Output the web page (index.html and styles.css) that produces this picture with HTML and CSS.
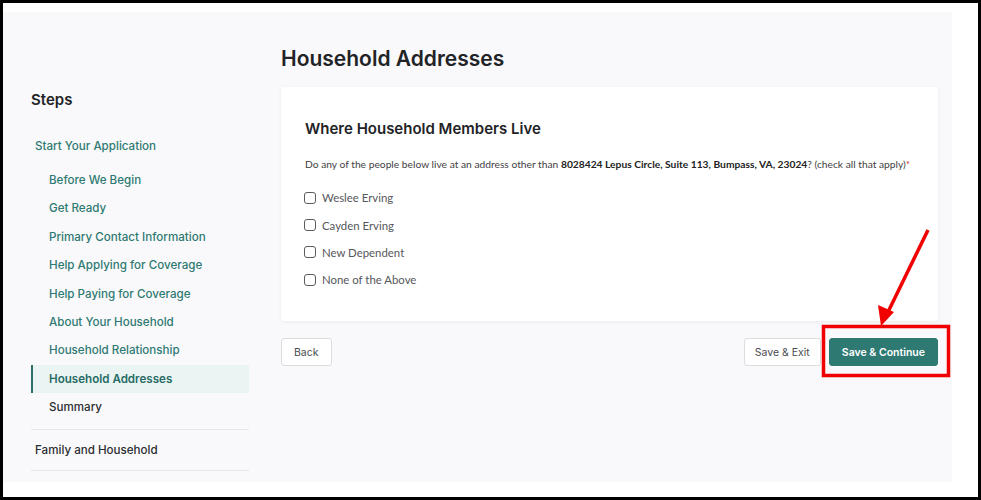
FILE: index.html
```html
<!DOCTYPE html>
<html lang="en">
<head>
<meta charset="utf-8">
<title>Household Addresses</title>
<link rel="stylesheet" href="styles.css">
</head>
<body>
<div class="frame">
  <div class="page">
    <aside class="sidebar">
      <h2 class="steps-title">Steps</h2>
      <div class="group">
        <div class="group-title">Start Your Application</div>
        <ul class="step-list">
          <li>Before We Begin</li>
          <li>Get Ready</li>
          <li>Primary Contact Information</li>
          <li>Help Applying for Coverage</li>
          <li>Help Paying for Coverage</li>
          <li>About Your Household</li>
          <li>Household Relationship</li>
          <li class="active">Household Addresses</li>
          <li class="pending">Summary</li>
        </ul>
      </div>
      <div class="group group-plain">
        <div class="group-title dark">Family and Household</div>
      </div>
    </aside>
    <main class="content">
      <h1 class="page-title">Household Addresses</h1>
      <section class="card">
        <h3 class="card-title">Where Household Members Live</h3>
        <p class="question">Do any of the people below live at an address other than <b>8028424 Lepus Circle, Suite 113, Bumpass, VA, 23024</b>? (check all that apply)<span class="req">*</span></p>
        <ul class="options">
          <li><span class="box"></span>Weslee Erving</li>
          <li><span class="box"></span>Cayden Erving</li>
          <li><span class="box"></span>New Dependent</li>
          <li><span class="box"></span>None of the Above</li>
        </ul>
      </section>
      <div class="actions">
        <button class="btn back">Back</button>
        <div class="right-actions">
          <button class="btn exit">Save &amp; Exit</button>
          <button class="btn primary">Save &amp; Continue</button>
        </div>
      </div>
    </main>
    <svg class="annotation" width="981" height="500" viewBox="0 0 981 500">
      <line x1="928" y1="230" x2="888" y2="312" stroke="#f00000" stroke-width="3.5"/>
      <polygon points="881,326 878,305 894,312" fill="#f00000"/>
      <rect x="823.5" y="326.5" width="125" height="49" fill="none" stroke="#f00000" stroke-width="3.5"/>
    </svg>
  </div>
</div>
</body>
</html>
```
FILE: styles.css
```css
* { box-sizing: border-box; }
html, body { margin: 0; padding: 0; }
body { background: #ffffff; font-family: "Inter", "Liberation Sans", sans-serif; }

.frame {
  width: 981px;
  height: 500px;
  border: 3px solid #000;
  background: #fff;
  padding: 9px 26px 15px 0;
}

.page {
  position: relative;
  height: 100%;
  background: #f9f9fb;
  display: flex;
  padding-left: 28px;
}

.sidebar {
  width: 218px;
  padding-top: 78px;
}

.steps-title {
  margin: 0 0 27px;
  font-size: 15px;
  font-weight: 600;
  color: #222326;
  line-height: 20px;
}

.group-title {
  padding-left: 4px;
  font-size: 11.6px;
  font-weight: 500;
  color: #2e7a72;
  line-height: 18px;
  margin-bottom: 11px;
}
.group-title.dark { color: #2b2d31; margin-bottom: 0; }

.step-list {
  list-style: none;
  margin: 0;
  padding: 0;
}
.step-list li {
  font-size: 11.6px;
  line-height: 18.4px;
  padding: 5px 0 5px 18px;
  color: #2e7a72;
  font-weight: 500;
}
.step-list li.active {
  background: #e9f4f3;
  border-left: 2px solid #2e6e68;
  padding-left: 16px;
  font-weight: 600;
  color: #276b64;
}
.step-list li.pending { color: #2b2d31; }

.group {
  border-bottom: 1px solid #e6e7ea;
  padding-bottom: 7px;
}
.group-plain { padding: 11px 0 11px; }

.content {
  margin-left: 32px;
  width: 657px;
  padding-top: 34px;
}

.page-title {
  margin: 0 0 15px;
  font-size: 21px;
  font-weight: 600;
  color: #222326;
  line-height: 26px;
}

.card {
  background: #fff;
  box-shadow: 0 1px 4px rgba(0,0,0,0.06);
  border-radius: 3px;
  padding: 32px 24px 24px;
  height: 234px;
}

.card-title {
  margin: 0 0 18px;
  font-size: 15px;
  font-weight: 600;
  color: #222326;
  line-height: 20px;
}

.question {
  margin: 0 0 13px;
  font-family: "Lato", "Liberation Sans", sans-serif;
  font-size: 10.25px;
  color: #3f4144;
  line-height: 14px;
  white-space: nowrap;
}
.question b { color: #222; font-weight: 700; }
.question .req { color: #c0392b; }

.options { list-style: none; margin: 0; padding: 0; }
.options li {
  display: flex;
  align-items: center;
  height: 27.4px;
  font-family: "Lato", "Liberation Sans", sans-serif;
  font-size: 11.4px;
  color: #55575b;
}
.box {
  width: 12px;
  height: 12px;
  border: 1.5px solid #5a5c60;
  border-radius: 3px;
  margin-right: 6px;
  background: #fff;
  margin-left: -1px;
}

.actions {
  display: flex;
  justify-content: space-between;
  margin-top: 17px;
}
.right-actions { display: flex; gap: 8px; }

.btn {
  font-family: "Inter", "Liberation Sans", sans-serif;
  font-size: 10.5px;
  height: 28px;
  padding: 0 12px;
  background: #fff;
  border: 1px solid #dcdde0;
  border-radius: 3px;
  color: #4a4c50;
}
.btn.back { padding: 0 12px; }
.btn.exit { padding: 0 10px; }
.btn.primary {
  background: #2e7a72;
  border-color: #2e7a72;
  color: #fff;
  font-weight: 600;
}

.annotation {
  position: absolute;
  left: -3px;
  top: -12px;
  pointer-events: none;
}
```
